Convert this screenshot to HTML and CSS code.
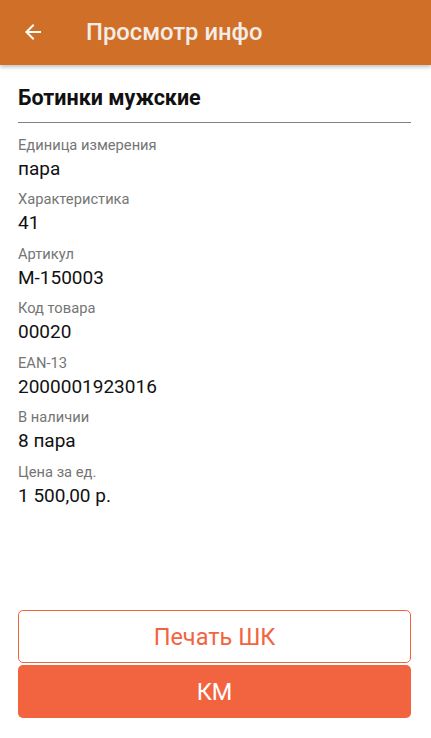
FILE: index.html
```html
<!DOCTYPE html>
<html lang="ru">
<head>
<meta charset="utf-8">
<link rel="stylesheet" href="styles.css">
</head>
<body>
<div class="screen">
  <header class="appbar">
    <svg class="back" width="24" height="24" viewBox="0 0 24 24"><path d="M20 11H7.83l5.59-5.59L12 4l-8 8 8 8 1.41-1.41L7.83 13H20v-2z" fill="#fff"/></svg>
    <h1 class="appbar-title">Просмотр инфо</h1>
  </header>
  <main class="content">
    <h2 class="name">Ботинки мужские</h2>
    <div class="fields">
      <div class="field"><div class="label">Единица измерения</div><div class="value">пара</div></div>
      <div class="field"><div class="label">Характеристика</div><div class="value">41</div></div>
      <div class="field"><div class="label">Артикул</div><div class="value">М-150003</div></div>
      <div class="field"><div class="label">Код товара</div><div class="value">00020</div></div>
      <div class="field"><div class="label">EAN-13</div><div class="value">2000001923016</div></div>
      <div class="field"><div class="label">В наличии</div><div class="value">8 пара</div></div>
      <div class="field"><div class="label">Цена за ед.</div><div class="value">1 500,00 р.</div></div>
    </div>
  </main>
  <footer class="actions">
    <button class="btn btn-outline">Печать ШК</button>
    <button class="btn btn-fill">КМ</button>
  </footer>
</div>
</body>
</html>
```
FILE: styles.css
```css
* { box-sizing: border-box; }
html, body { margin: 0; padding: 0; background: #fff; }
body { font-family: Roboto, "Noto Sans", sans-serif; }
.screen { width: 431px; height: 738px; display: flex; flex-direction: column; }
.appbar {
  height: 65px; background: #D07028; display: flex; align-items: center;
  padding-left: 21px; box-shadow: 0 2px 4px rgba(0,0,0,0.25); position: relative; z-index: 1;
  flex-shrink: 0;
}
.back { display: block; margin-top: -2px; }
.appbar-title {
  margin: -2px 0 0 41px; font-size: 23.8px; font-weight: 500; color: #f4ece6;
}
.content { flex: 1; padding: 0 20px 0 18px; }
.name {
  margin: 0; padding-top: 20px; height: 58px; font-size: 21.5px; font-weight: 700; color: #111;
  border-bottom: 1px solid #808080; line-height: 26px;
}
.fields { padding-top: 12.5px; }
.field { height: 54.6px; }
.label { font-size: 14.7px; color: #757575; line-height: 19px; }
.value { font-size: 19px; color: #111; line-height: 27px; }
.actions { padding: 0 20px 20px 18px; display: flex; flex-direction: column; gap: 2px; }
.btn {
  height: 53px; width: 100%; border-radius: 5px; font-family: Roboto, sans-serif;
  font-size: 23.5px; cursor: pointer;
}
.btn-outline { background: #fff; border: 1px solid #F26440; color: #F26440; }
.btn-fill { background: #F26440; border: none; color: #fff; }
```
